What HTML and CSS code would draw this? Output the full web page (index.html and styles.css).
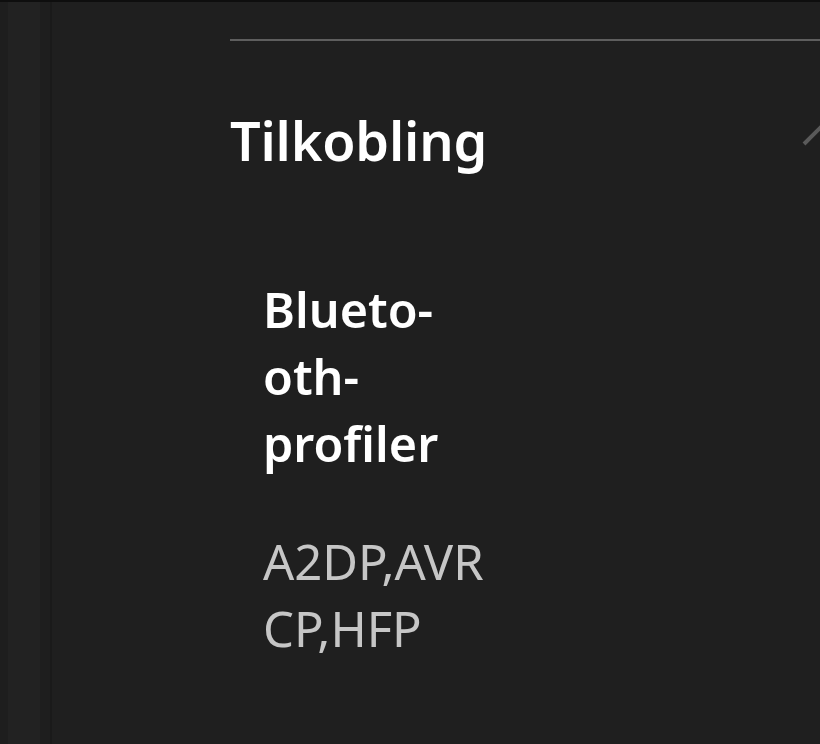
FILE: index.html
```html
<!DOCTYPE html>
<html lang="no">
<head>
<meta charset="utf-8">
<link rel="stylesheet" href="styles.css">
</head>
<body>
<div class="page">
  <aside class="rail"><div class="rail-inner"></div></aside>
  <main class="content">
    <div class="divider"></div>
    <section class="section">
      <header class="section-head">
        <h2 class="section-title">Tilkobling</h2>
        <svg class="chevron" width="40" height="40" viewBox="0 0 40 40" aria-hidden="true">
          <polyline points="2,32 22,12 42,32" fill="none" stroke="#5a5a5a" stroke-width="4"/>
        </svg>
      </header>
      <dl class="spec">
        <dt class="spec-label"><span class="line">Blueto-</span><span class="line">oth-</span><span class="line">profiler</span></dt>
        <dd class="spec-value"><span class="line">A2DP,AVR</span><span class="line">CP,HFP</span></dd>
      </dl>
    </section>
  </main>
</div>
</body>
</html>
```
FILE: styles.css
```css
html, body {
  margin: 0;
  padding: 0;
  background: #1f1f1f;
}
body {
  font-family: "Noto Sans", "Open Sans", sans-serif;
  color: #ffffff;
  width: 820px;
  height: 744px;
  overflow: hidden;
}
.page {
  display: flex;
  height: 744px;
  border-top: 2px solid #0e0e0e;
  box-sizing: border-box;
}
.rail {
  flex: none;
  background: #1e1e1e;
  border-right: 2px solid #1a1a1a;
  display: flex;
  padding-left: 8px;
  width: 42px;
}
.rail-inner {
  width: 32px;
  background: #222222;
}
.content {
  flex: 1;
  padding-left: 178px;
  padding-top: 37px;
  overflow: hidden;
}
.divider {
  height: 2px;
  background: #5e5e5e;
}
.section-head {
  display: flex;
  justify-content: space-between;
  align-items: flex-start;
  margin-top: 59px;
}
.section-title {
  margin: 0;
  font-size: 54px;
  font-weight: 600;
  line-height: 80px;
  letter-spacing: -0.2px;
}
.chevron {
  margin-top: 12px;
  margin-right: -22px;
}
.spec {
  margin: 96px 0 0 33px;
  width: 240px;
}
.spec-label {
  font-size: 48.5px;
  font-weight: 600;
  line-height: 67px;
}
.spec-value {
  margin: 51px 0 0;
  font-size: 49px;
  font-weight: 400;
  line-height: 67px;
  color: #c6c6c6;
}
.line {
  display: block;
  white-space: nowrap;
}
```
